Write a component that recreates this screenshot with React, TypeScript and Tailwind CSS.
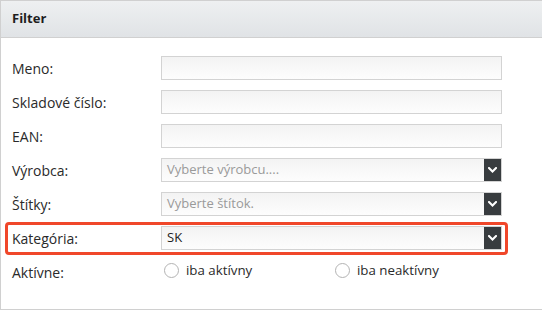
import React from "react";

function Chevron() {
  return (
    <svg width="9" height="6" viewBox="0 0 9 6" className="block">
      <polyline points="1,1 4.5,4.5 8,1" fill="none" stroke="#ffffff" strokeWidth="2" strokeLinecap="square" />
    </svg>
  );
}

function TextInput() {
  return <div className="w-[341px] h-[24px] border border-[#d3d3d3] bg-gradient-to-b from-[#f3f3f3] to-[#fdfdfd]" />;
}

function Select({ value, placeholder }: { value?: string; placeholder?: string }) {
  return (
    <div className="w-[341px] h-[24px] border border-[#d3d3d3] bg-gradient-to-b from-[#f3f3f3] to-[#fdfdfd] flex items-stretch">
      <div className={`flex-1 flex items-center pl-[5px] text-[13px] ${value ? "text-[#222]" : "text-[#9a9a9a]"}`}>
        {value ?? placeholder}
      </div>
      <div className="w-[17px] bg-[#383c3f] flex items-center justify-center">
        <Chevron />
      </div>
    </div>
  );
}

function Row({ label, children, highlight }: { label: string; children: React.ReactNode; highlight?: boolean }) {
  return (
    <div className="relative flex items-center h-[24px] w-[490px]">
      {highlight && (
        <div className="absolute left-[-7px] right-[-6px] top-[-4px] bottom-[-5px] border-[3px] border-[#f0472a] rounded-[4px] pointer-events-none" />
      )}
      <div className="w-[149px] text-[14px] text-[#2a2a2a]">{label}</div>
      {children}
    </div>
  );
}

function Radio({ label, className }: { label: string; className?: string }) {
  return (
    <div className={`flex items-center ${className ?? ""}`}>
      <div className="w-[15px] h-[15px] rounded-full border-[1.5px] border-[#b3b3b3] bg-white" />
      <span className="ml-[7px] text-[13.3px] text-[#2a2a2a]">{label}</span>
    </div>
  );
}

export default function App() {
  return (
    <div className="w-[542px] h-[311px] bg-white" style={{ fontFamily: '"Open Sans", "Noto Sans", sans-serif' }}>
      <div className="h-[310px] border-t border-l border-b border-[#d0d0d0] flex flex-col">
        <div className="h-[37px] border-b border-[#d0d0d0] bg-gradient-to-b from-[#eef0f1] to-[#e0e3e6] flex items-center pl-[11px]">
          <span className="text-[13px] font-bold text-[#1e1e1e]">Filter</span>
        </div>
        <div className="pl-[11px] pt-[18px] flex flex-col gap-[10px]">
          <Row label="Meno:"><TextInput /></Row>
          <Row label="Skladové číslo:"><TextInput /></Row>
          <Row label="EAN:"><TextInput /></Row>
          <Row label="Výrobca:"><Select placeholder="Vyberte výrobcu...." /></Row>
          <Row label="Štítky:"><Select placeholder="Vyberte štítok." /></Row>
          <Row label="Kategória:" highlight><Select value="SK" /></Row>
          <Row label="Aktívne:">
            <div className="flex items-center pl-[3px] -mt-[3px]">
              <Radio label="iba aktívny" className="w-[171px]" />
              <Radio label="iba neaktívny" />
            </div>
          </Row>
        </div>
      </div>
    </div>
  );
}
